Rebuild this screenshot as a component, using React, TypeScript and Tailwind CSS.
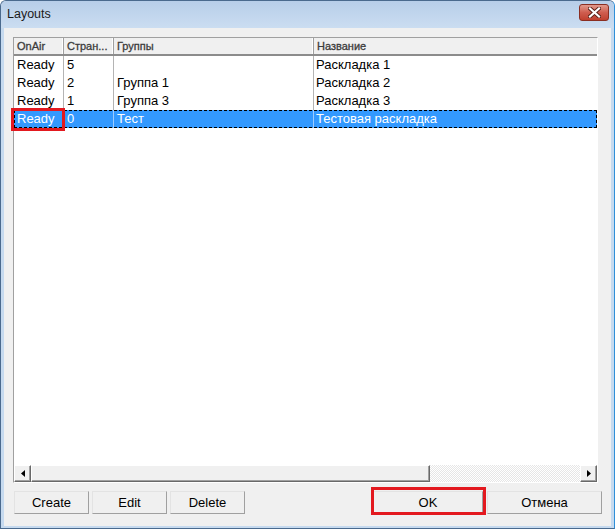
import React from "react";

const rows = [
  { a: "Ready", b: "5", c: "", d: "Раскладка 1", sel: false },
  { a: "Ready", b: "2", c: "Группа 1", d: "Раскладка 2", sel: false },
  { a: "Ready", b: "1", c: "Группа 3", d: "Раскладка 3", sel: false },
  { a: "Ready", b: "0", c: "Тест", d: "Тестовая раскладка", sel: true },
];

function Btn({ label, w }: { label: string; w: string }) {
  return (
    <div
      className={`${w} h-[23px] flex items-center justify-center bg-[#f0f0f0] border border-t-[#e3e3e3] border-l-[#e3e3e3] border-r-[#a0a0a0] border-b-[#a0a0a0] text-[13px] text-black`}
    >
      {label}
    </div>
  );
}

function ScrollBtn({ dir }: { dir: "l" | "r" }) {
  return (
    <div className="w-[17px] h-[17px] shrink-0 flex items-center justify-center bg-[#f0f0f0] border border-t-white border-l-white border-r-[#696969] border-b-[#696969] shadow-[inset_-1px_-1px_0_#a0a0a0]">
      <svg width="4" height="7" viewBox="0 0 4 7">
        {dir === "l" ? <path d="M4 0 L0 3.5 L4 7Z" fill="#000" /> : <path d="M0 0 L4 3.5 L0 7Z" fill="#000" />}
      </svg>
    </div>
  );
}

export default function App() {
  return (
    <div className="relative w-[615px] h-[529px] font-['Liberation_Sans',Arial,sans-serif]">
      <div className="w-full h-full flex flex-col bg-[#c6daef] border border-[#4a6a8e] border-r-[#2f8fd8] rounded-t-[6px] overflow-hidden">
        {/* title bar */}
        <div className="h-[27px] shrink-0 flex items-center pl-[6px] bg-gradient-to-b from-[#b7cee9] to-[#cbddf1]">
          <span className="text-[12.5px] text-[#1b1b1b]">Layouts</span>
          <div className="ml-auto mr-[5px] mt-[-4px] w-[30px] h-[17px] rounded-[3px] border border-[#8a2e22] bg-gradient-to-b from-[#e0998d] via-[#cf5d4f] to-[#c0402f] flex items-center justify-center">
            <svg width="13" height="11" viewBox="0 0 13 11">
              <path d="M2 1.5 L11 9.5 M11 1.5 L2 9.5" stroke="#5a2018" strokeWidth="4" strokeLinecap="square" />
              <path d="M2 1.5 L11 9.5 M11 1.5 L2 9.5" stroke="#ffffff" strokeWidth="2.2" strokeLinecap="square" />
            </svg>
          </div>
        </div>
        {/* client */}
        <div className="flex-1 mx-[3px] mb-[2px] bg-[#f0f0f0] flex flex-col pt-[9px]">
          {/* listview */}
          <div className="ml-[9px] w-[585px] h-[446px] flex flex-col border border-t-[#a0a0a0] border-l-[#a0a0a0] border-r-white border-b-white bg-white overflow-hidden">
            {/* header */}
            <div className="h-[18px] shrink-0 flex bg-[#f0f0f0] border-b-2 border-[#8c8c8c] text-[11px] text-[#3c3c3c] [-webkit-text-stroke:0.3px_#3c3c3c]">
              <div className="w-[50px] pl-[3px] flex items-center border-r border-[#a0a0a0] shadow-[inset_-1px_0_0_#fff]">OnAir</div>
              <div className="w-[50px] pl-[3px] flex items-center border-r border-[#a0a0a0] shadow-[inset_-1px_0_0_#fff]">Стран...</div>
              <div className="w-[200px] pl-[3px] flex items-center border-r border-[#a0a0a0] shadow-[inset_-1px_0_0_#fff]">Группы</div>
              <div className="flex-1 pl-[3px] flex items-center">Название</div>
            </div>
            {/* rows */}
            {rows.map((r, i) => (
              <div
                key={i}
                className={`h-[18px] shrink-0 flex text-[13px] ${
                  r.sel ? "bg-[#3399ff] text-white outline outline-1 outline-dashed outline-black -outline-offset-1" : "text-black"
                }`}
              >
                <div className={`w-[50px] pl-[3px] flex items-center border-r ${r.sel ? "border-[#9ccbff]" : "border-[#b4b4b4]"}`}>{r.a}</div>
                <div className={`w-[50px] pl-[3px] flex items-center border-r ${r.sel ? "border-[#9ccbff]" : "border-[#b4b4b4]"}`}>{r.b}</div>
                <div className={`w-[200px] pl-[3px] flex items-center border-r ${r.sel ? "border-[#9ccbff]" : "border-[#b4b4b4]"}`}>{r.c}</div>
                <div className="flex-1 pl-[2px] flex items-center">{r.d}</div>
              </div>
            ))}
            <div className="flex-1" />
            {/* horizontal scrollbar */}
            <div className="h-[17px] shrink-0 flex">
              <ScrollBtn dir="l" />
              <div className="w-[399px] h-[17px] bg-[#f0f0f0] border border-t-white border-l-white border-r-[#696969] border-b-[#696969] shadow-[inset_-1px_-1px_0_#a0a0a0]" />
              <div className="flex-1 h-[17px] bg-[repeating-conic-gradient(#ffffff_0_25%,#e6e6e6_0_50%)] bg-[length:2px_2px]" />
              <ScrollBtn dir="r" />
            </div>
          </div>
          {/* buttons */}
          <div className="mt-[8px] flex pl-[10px] pr-[9px]">
            <div className="flex gap-[3px]">
              <Btn label="Create" w="w-[75px]" />
              <Btn label="Edit" w="w-[75px]" />
              <Btn label="Delete" w="w-[75px]" />
            </div>
            <div className="ml-auto flex gap-[4px]">
              <Btn label="OK" w="w-[110px]" />
              <Btn label="Отмена" w="w-[115px]" />
            </div>
          </div>
        </div>
      </div>
      {/* red annotation boxes */}
      <div className="absolute left-[11px] top-[108px] w-[54px] h-[23px] border-[3px] border-[#e3191f]" />
      <div className="absolute left-[371px] top-[487px] w-[115px] h-[28px] border-[3px] border-[#e3191f]" />
    </div>
  );
}
